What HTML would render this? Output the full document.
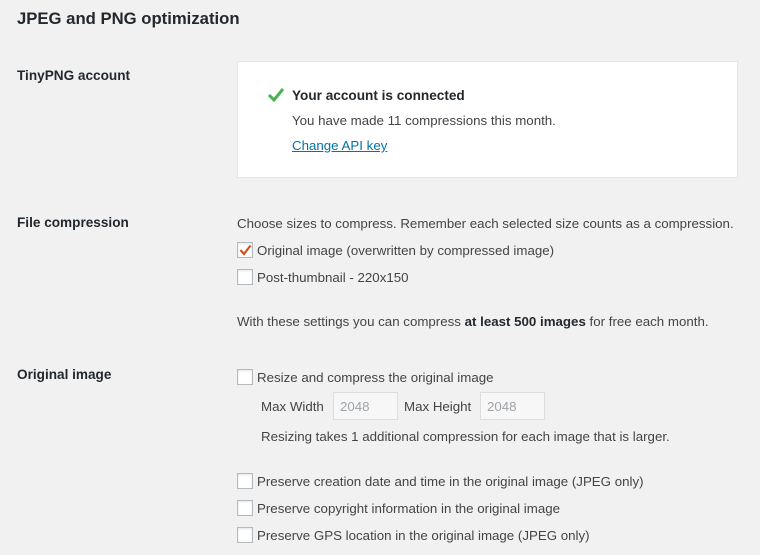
<!DOCTYPE html>
<html><head><style>
body{margin:0;width:760px;height:555px;background:#f1f1f1;font-family:"Liberation Sans",sans-serif;color:#444;font-size:13.3px;position:relative;overflow:hidden}
.a{position:absolute;white-space:nowrap;line-height:17px}
h1{position:absolute;left:17px;top:9px;margin:0;font-size:16.7px;color:#23282d;font-weight:bold;line-height:20px}
.l{font-weight:bold;color:#23282d;font-size:13.6px}
.box{position:absolute;left:237px;top:61px;width:499px;height:115px;background:#fff;border:1px solid #e5e5e5}
.cb{position:absolute;left:237px;width:14px;height:14px;border:1px solid #b4b9be;background:#fff;box-shadow:inset 0 1px 2px rgba(0,0,0,.1)}
.in{position:absolute;top:392px;width:65px;height:28px;border:1px solid #ddd;background:#f7f7f7;color:#a0a5aa;font-size:13.3px;line-height:28px;padding-left:6px;box-sizing:border-box}
a{color:#0073aa}
</style></head><body>
<h1>JPEG and PNG optimization</h1>
<div class="a l" style="left:17px;top:67px">TinyPNG account</div>
<div class="box"></div>
<svg class="a" style="left:267px;top:87px" width="18" height="16" viewBox="0 0 18 16"><path d="M2 8 L7 13 L16 2" stroke="#46b450" stroke-width="3" fill="none"/></svg>
<div class="a" style="left:292px;top:87px;font-weight:bold;color:#23282d;font-size:13.6px">Your account is connected</div>
<div class="a" style="left:292px;top:112px">You have made 11 compressions this month.</div>
<div class="a" style="left:292px;top:137px"><a href="#">Change API key</a></div>
<div class="a l" style="left:17px;top:214px">File compression</div>
<div class="a" style="left:237px;top:215px">Choose sizes to compress. Remember each selected size counts as a compression.</div>
<div class="cb" style="top:242px"></div>
<svg class="a" style="left:238px;top:243px" width="15" height="15" viewBox="0 0 15 15"><path d="M2.5 7 L6 11 L12.5 2.5" stroke="#d54e21" stroke-width="2.2" fill="none"/></svg>
<div class="a" style="left:257px;top:242px">Original image (overwritten by compressed image)</div>
<div class="cb" style="top:269px"></div>
<div class="a" style="left:257px;top:269px">Post-thumbnail - 220x150</div>
<div class="a" style="left:237px;top:313px">With these settings you can compress <b style="color:#23282d">at least 500 images</b> for free each month.</div>
<div class="a l" style="left:17px;top:366px">Original image</div>
<div class="cb" style="top:369px"></div>
<div class="a" style="left:257px;top:369px">Resize and compress the original image</div>
<div class="a" style="left:261px;top:398px">Max Width</div>
<div class="in" style="left:333px">2048</div>
<div class="a" style="left:404px;top:398px">Max Height</div>
<div class="in" style="left:480px">2048</div>
<div class="a" style="left:261px;top:428px">Resizing takes 1 additional compression for each image that is larger.</div>
<div class="cb" style="top:473px"></div>
<div class="a" style="left:257px;top:473px">Preserve creation date and time in the original image (JPEG only)</div>
<div class="cb" style="top:500px"></div>
<div class="a" style="left:257px;top:500px">Preserve copyright information in the original image</div>
<div class="cb" style="top:527px"></div>
<div class="a" style="left:257px;top:527px">Preserve GPS location in the original image (JPEG only)</div>
</body></html>
